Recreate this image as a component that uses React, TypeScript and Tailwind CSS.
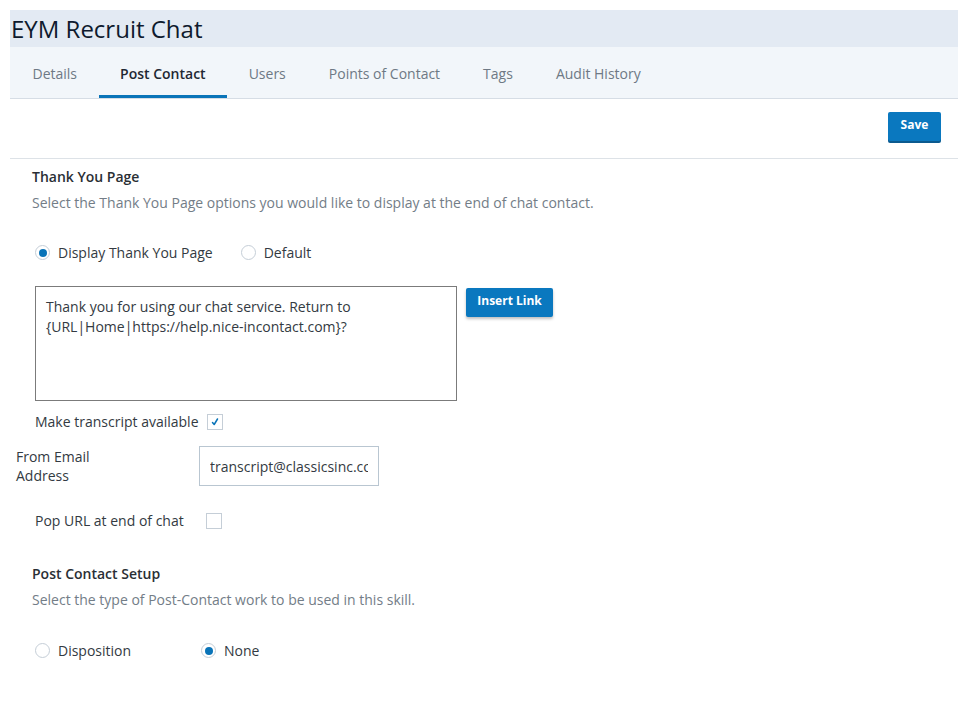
import { useState } from "react";

const tabs = ["Details", "Post Contact", "Users", "Points of Contact", "Tags", "Audit History"];

const Radio = ({ checked, label, onClick }: { checked: boolean; label: string; onClick: () => void }) => (
  <button type="button" onClick={onClick} className="flex items-center gap-[8px] text-[14px] text-[#333a42]">
    <span className="flex h-[15px] w-[15px] items-center justify-center rounded-full border border-[#c5ced7] bg-white">
      {checked && <span className="h-[8px] w-[8px] rounded-full bg-[#0a74b8]" />}
    </span>
    {label}
  </button>
);

const Checkbox = ({ checked, onClick }: { checked: boolean; onClick: () => void }) => (
  <button
    type="button"
    onClick={onClick}
    className="flex h-[16px] w-[16px] items-center justify-center border border-[#c5ced7] bg-white"
  >
    {checked && (
      <svg width="10" height="10" viewBox="0 0 10 10" fill="none">
        <path d="M2.5 5.5 L4.2 7.5 L7.5 2" stroke="#0a74b8" strokeWidth="1.5" strokeLinecap="round" strokeLinejoin="round" />
      </svg>
    )}
  </button>
);

export default function App() {
  const [thankYou, setThankYou] = useState("display");
  const [transcript, setTranscript] = useState(true);
  const [popUrl, setPopUrl] = useState(false);
  const [setup, setSetup] = useState("none");

  return (
    <div className="min-h-[710px] bg-white pl-[10px] pr-[5px] pt-[10px] font-['Open_Sans',sans-serif] text-[14px]">
      <div className="flex h-[37px] items-center bg-[#e3eaf3] px-px">
        <h1 className="text-[24px] leading-none text-[#0e1a2e]">EYM Recruit Chat</h1>
      </div>
      <nav className="flex h-[52px] border-b border-[#d6dde5] bg-[#f2f6fa] pl-[1px]">
        {tabs.map((t) => (
          <div
            key={t}
            className={
              t === "Post Contact"
                ? "flex items-center border-b-[3px] border-[#0a74b8] px-[21.5px] pt-[5px] font-semibold text-[#1f2833]"
                : "flex items-center border-b-[3px] border-transparent px-[21.5px] pt-[5px] text-[#6e7985]"
            }
          >
            {t}
          </div>
        ))}
      </nav>
      <div className="flex justify-end border-b border-[#dde2e7] pb-[17px] pr-[17px] pt-[13px]">
        <button
          type="button"
          className="h-[29px] w-[53px] rounded-[2px] bg-[#0a78bf] pb-[4px] text-[12px] font-bold text-white shadow-[0_2px_0_#0b5a8f]"
        >
          Save
        </button>
      </div>

      <section className="pl-[22px] pt-[8px]">
        <h2 className="text-[14px] font-semibold leading-[20px] text-[#2a2f35]">Thank You Page</h2>
        <p className="mt-[6px] leading-[20px] text-[#737d87]">
          Select the Thank You Page options you would like to display at the end of chat contact.
        </p>
        <div className="mt-[29px] flex items-center gap-[28px] pl-[3px]">
          <Radio checked={thankYou === "display"} label="Display Thank You Page" onClick={() => setThankYou("display")} />
          <Radio checked={thankYou === "default"} label="Default" onClick={() => setThankYou("default")} />
        </div>
      </section>

      <div className="mt-[23px] flex items-start gap-[9px] pl-[25px]">
        <div className="h-[115px] w-[422px] border border-[#7b7b7b] px-[10px] pt-[10px] leading-[20px] text-[#333a42]">
          Thank you for using our chat service. Return to
          <br />
          {"{URL|Home|https://help.nice-incontact.com}?"}
        </div>
        <button
          type="button"
          className="mt-[2px] h-[29px] w-[87px] rounded-[2px] bg-[#0a78bf] pb-[4px] text-[12px] font-bold text-white shadow-[0_2px_3px_rgba(0,0,0,0.25)]"
        >
          Insert Link
        </button>
      </div>

      <div className="mt-[10px] flex items-center gap-[8px] pl-[25px] text-[#333a42]">
        <span>Make transcript available</span>
        <Checkbox checked={transcript} onClick={() => setTranscript(!transcript)} />
      </div>

      <div className="mt-[14px] flex items-center pl-[6px] text-[#333a42]">
        <div className="w-[183px] leading-[19px]">
          From Email
          <br />
          Address
        </div>
        <input
          readOnly
          value="transcript@classicsinc.com"
          className="h-[40px] w-[180px] border border-[#b9c6d1] px-[10px] text-[14px] text-[#333a42] outline-none"
        />
      </div>

      <div className="mt-[24px] flex items-center pl-[25px] text-[#333a42]">
        <span className="w-[171px]">Pop URL at end of chat</span>
        <Checkbox checked={popUrl} onClick={() => setPopUrl(!popUrl)} />
      </div>

      <section className="pl-[22px] pt-[33px]">
        <h2 className="text-[14px] font-semibold leading-[20px] text-[#2a2f35]">Post Contact Setup</h2>
        <p className="mt-[6px] leading-[20px] text-[#737d87]">
          Select the type of Post-Contact work to be used in this skill.
        </p>
        <div className="mt-[30px] flex items-center pl-[3px]">
          <div className="w-[166px]">
            <Radio checked={setup === "disposition"} label="Disposition" onClick={() => setSetup("disposition")} />
          </div>
          <Radio checked={setup === "none"} label="None" onClick={() => setSetup("none")} />
        </div>
      </section>
    </div>
  );
}
